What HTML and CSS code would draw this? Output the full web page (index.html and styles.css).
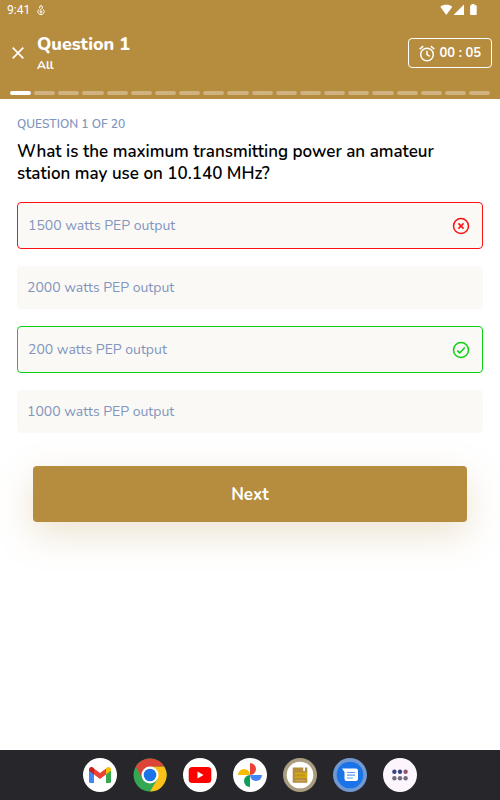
FILE: index.html
```html
<!DOCTYPE html>
<html lang="en">
<head>
    <meta charset="UTF-8">
    <meta name="viewport" content="width=device-width, initial-scale=1.0">
    <link rel="stylesheet" href="styles.css">
    <title>Question 1</title>
</head>
<body>
    <header class="header">
        <div class="status-bar">
            <span class="clock">9:41</span>
            <svg class="mic" width="8" height="11" viewBox="0 0 8 11" fill="none" stroke="#fff">
                <path d="M2.700 3.300V2a1.300 1.300 0 0 1 2.600 0v1.300L2.700 5.500"/>
                <path d="M2.200 4.200C-.3 5.800.8 9.600 4 9.600s4.300-3.800 1.800-5.400M2.500 7h3M4 5.500v3"/>
            </svg>
            <svg class="signals" width="38" height="12" viewBox="0 0 38 12" fill="#fff">
                <path d="M.3 2.800C3.900.2 8.700.2 12.300 2.800L6.300 11z"/>
                <path d="M24 .5V11H13.500z"/>
                <path d="M31.500 0h3v1.200H36q.7 0 .7.700v8.400q0 .7-.7.700h-5.200q-.7 0-.7-.7V1.900q0-.7.7-.7h.7z"/>
            </svg>
        </div>

        <div class="title-row">
            <button class="close" aria-label="Close">
                <svg width="12" height="12" viewBox="0 0 12 12" fill="none" stroke="#fff" stroke-width="1.700">
                    <path d="M.7.7l10.600 10.600M11.300.7L.7 11.300"/>
                </svg>
            </button>
            <div class="titles">
                <h1>Question 1</h1>
                <p>All</p>
            </div>
            <div class="timer">
                <svg width="16" height="17" viewBox="0 0 16 17" fill="none" stroke="#fff" stroke-width="1.500">
                    <circle cx="8" cy="9.500" r="6.300"/>
                    <path d="M8 5.700v4l2.800 1.700M.7 4.100L4.200 1.200M15.300 4.100L11.800 1.200"/>
                </svg>
                <span>00 : 05</span>
            </div>
        </div>

        <div class="progress">
            <span class="step active"></span>
            <span class="step"></span>
            <span class="step"></span>
            <span class="step"></span>
            <span class="step"></span>
            <span class="step"></span>
            <span class="step"></span>
            <span class="step"></span>
            <span class="step"></span>
            <span class="step"></span>
            <span class="step"></span>
            <span class="step"></span>
            <span class="step"></span>
            <span class="step"></span>
            <span class="step"></span>
            <span class="step"></span>
            <span class="step"></span>
            <span class="step"></span>
            <span class="step"></span>
            <span class="step"></span>
        </div>
    </header>

    <main class="quiz">
        <p class="counter">QUESTION 1 OF 20</p>
        <h2 class="question">What is the maximum transmitting power an amateur station may use on 10.140 MHz?</h2>

        <div class="answers">
            <button class="answer wrong">
                <span>1500 watts PEP output</span>
                <svg width="18" height="18" viewBox="0 0 18 18" fill="none" stroke="currentColor" stroke-width="1.500">
                    <circle cx="9" cy="9" r="7.500"/>
                    <path d="M6.400 6.400l5.200 5.200M11.600 6.400l-5.200 5.200"/>
                </svg>
            </button>
            <button class="answer"><span>2000 watts PEP output</span></button>
            <button class="answer right">
                <span>200 watts PEP output</span>
                <svg width="18" height="18" viewBox="0 0 18 18" fill="none" stroke="currentColor" stroke-width="1.500">
                    <circle cx="9" cy="9" r="7.500"/>
                    <path d="M5.200 9.600l2.500 2.300 5.100-5.500"/>
                </svg>
            </button>
            <button class="answer"><span>1000 watts PEP output</span></button>
        </div>

        <button class="next">Next</button>
    </main>

    <nav class="dock">
        <a href="#" aria-label="Gmail">
            <svg width="34" height="34" viewBox="0 0 34 34">
                <circle cx="17" cy="17" r="17" fill="#fff"/>
                <path d="M6 12v11.500q0 1.500 1.500 1.500H11V15z" fill="#4285f4"/>
                <path d="M28 12v11.500q0 1.500-1.500 1.500H23V15z" fill="#34a853"/>
                <path d="M11 10.500l6 4.500 6-4.500v6L17 21l-6-4.500z" fill="#ea4335"/>
                <path d="M6 11.500C6 9 8.800 7.900 11 10.500v6l-5-3.700z" fill="#c5221f"/>
                <path d="M28 11.500c0-2.500-2.800-3.600-5-1v6l5-3.700z" fill="#fbbc04"/>
            </svg>
        </a>
        <a href="#" aria-label="Chrome">
            <svg width="34" height="34" viewBox="0 0 34 34">
                <circle cx="17" cy="17" r="16.500" fill="#34a853"/>
                <path d="M17 8.500h14.200A16.500 16.500 0 0 1 17 33.500L24.400 21.200z" fill="#fbc116"/>
                <path d="M2.800 8.600A16.500 16.500 0 0 1 31.200 8.500H17L9.700 21.300z" fill="#db4437"/>
                <circle cx="17" cy="17" r="8.500" fill="#fff"/>
                <circle cx="17" cy="17" r="6.300" fill="#1a73e8"/>
            </svg>
        </a>
        <a href="#" aria-label="YouTube">
            <svg width="34" height="34" viewBox="0 0 34 34">
                <circle cx="17" cy="17" r="17" fill="#fff"/>
                <rect x="5.700" y="9" width="22.600" height="16" rx="3.500" fill="#f00"/>
                <path d="M14.500 13.500v7l6-3.500z" fill="#fff"/>
            </svg>
        </a>
        <a href="#" aria-label="Photos">
            <svg width="34" height="34" viewBox="0 0 34 34">
                <circle cx="17" cy="17" r="17" fill="#fff"/>
                <path d="M17 5a6 6 0 0 1 0 12z" fill="#ea4335"/>
                <path d="M29 17a6 6 0 0 1-12 0z" fill="#4285f4"/>
                <path d="M17 29a6 6 0 0 1 0-12z" fill="#0f9d58"/>
                <path d="M5 17a6 6 0 0 1 12 0z" fill="#fbbc04"/>
            </svg>
        </a>
        <a href="#" aria-label="Quiz">
            <svg width="34" height="34" viewBox="0 0 34 34">
                <circle cx="17" cy="17" r="17" fill="#aa9c80"/>
                <circle cx="17" cy="17" r="13.300" fill="#fff"/>
                <path d="M9.700 9.500h10.600v3.500h1.700V9.500h2.300v15.300H9.700z" fill="#b68c3e"/>
                <rect x="12" y="14.500" width="12" height="5.500" fill="#d0aa12"/>
                <path d="M13 18.500v-2m2 2v-2.500m2 2.500v-2m2 2v-2.500m2 2.500v-2" stroke="#a37b29" stroke-width=".8"/>
                <path d="M12.500 22.500h10" stroke="#cda966"/>
            </svg>
        </a>
        <a href="#" aria-label="Messages">
            <svg width="34" height="34" viewBox="0 0 34 34">
                <circle cx="17" cy="17" r="17" fill="#7198cf"/>
                <circle cx="17" cy="17" r="13.300" fill="#1a73e8"/>
                <path d="M9 10.500h14q2 0 2 2v8.500q0 2-2 2H13.500q-2 0-2-2v-7z" fill="#fff"/>
                <path d="M14 14.500h8M14 17.200h8M14 20h6" stroke="#5f9bef" stroke-width="1.200"/>
            </svg>
        </a>
        <a href="#" aria-label="All apps">
            <svg width="34" height="34" viewBox="0 0 34 34">
                <circle cx="17" cy="17" r="17" fill="#fcf5fd"/>
                <circle cx="11.400" cy="13.700" r="2.200" fill="#354580"/>
                <circle cx="17" cy="13.700" r="2.200" fill="#354580"/>
                <circle cx="22.600" cy="13.700" r="2.200" fill="#8c5570"/>
                <circle cx="11.400" cy="20.300" r="2.200" fill="#6f6d7d"/>
                <circle cx="17" cy="20.300" r="2.200" fill="#6f6d7d"/>
                <circle cx="22.600" cy="20.300" r="2.200" fill="#6f6d7d"/>
            </svg>
        </a>
    </nav>
</body>
</html>
```
FILE: styles.css
```css
* {
    box-sizing: border-box;
}

body {
    font-family: Nunito, 'Open Sans', sans-serif;
    display: flex;
    flex-direction: column;
    min-height: 100vh;
    margin: 0;
    background-color: #fff;
}

h1, h2, p {
    margin: 0;
}

button {
    font-family: inherit;
    border: none;
    cursor: pointer;
}

svg {
    display: block;
    flex: none;
}

.header {
    background-color: #b68c3e;
    color: #fff;
    padding-bottom: 4px;
}

.status-bar {
    display: flex;
    align-items: center;
    height: 20px;
    padding: 0 22px 0 7px;
    font-family: Roboto, sans-serif;
    font-size: 12px;
}

.mic {
    margin-left: 7px;
}

.signals {
    margin-left: auto;
}

.title-row {
    display: flex;
    align-items: center;
    height: 66px;
    padding: 0 8px 0 12px;
}

.close {
    padding: 0;
    background: none;
}

.titles {
    flex: 1;
    margin-left: 13px;
}

.titles h1 {
    font-size: 18px;
    line-height: 24px;
    font-weight: 800;
}

.titles p {
    font-size: 12px;
    line-height: 18px;
    font-weight: 700;
}

.timer {
    display: flex;
    align-items: center;
    gap: 5px;
    height: 30px;
    padding: 0 10px;
    border: 1px solid #fff;
    border-radius: 4px;
    font-size: 13px;
    font-weight: 700;
}

.progress {
    display: flex;
    gap: 3px;
    padding: 5px 10px 0;
}

.step {
    flex: 1;
    height: 4px;
    border-radius: 2px;
    background-color: #cfb280;
}

.step.active {
    background-color: #fff;
}

.quiz {
    flex: 1;
    padding: 16px 17px 40px;
}

.counter {
    color: #8195be;
    font-size: 12px;
    line-height: 18px;
    font-weight: 600;
}

.question {
    margin-top: 8px;
    color: #000;
    font-size: 17px;
    line-height: 22px;
    font-weight: 600;
}

.answers {
    display: flex;
    flex-direction: column;
    gap: 17px;
    margin-top: 17px;
}

.answer {
    display: flex;
    align-items: center;
    justify-content: space-between;
    height: 43px;
    padding: 0 10px;
    border-radius: 4px;
    background-color: #fbf9f5;
    color: #8195be;
    font-size: 14px;
    text-align: left;
}

.answer.wrong,
.answer.right {
    height: 47px;
    padding-right: 12px;
}

.answer.wrong {
    border: 1px solid #ff1010;
}

.answer.right {
    border: 1px solid #0bd014;
}

.wrong svg {
    color: #ff1010;
}

.right svg {
    color: #0bd014;
}

.next {
    display: block;
    width: calc(100% - 32px);
    height: 56px;
    margin: 33px auto 0;
    border-radius: 4px;
    background-color: #b68c3e;
    box-shadow: 0 12px 36px rgba(182, 140, 62, 0.25);
    color: #fff;
    font-size: 17px;
    font-weight: 700;
}

.dock {
    display: flex;
    justify-content: center;
    align-items: center;
    gap: 16px;
    height: 50px;
    background-color: #26262b;
}
```
